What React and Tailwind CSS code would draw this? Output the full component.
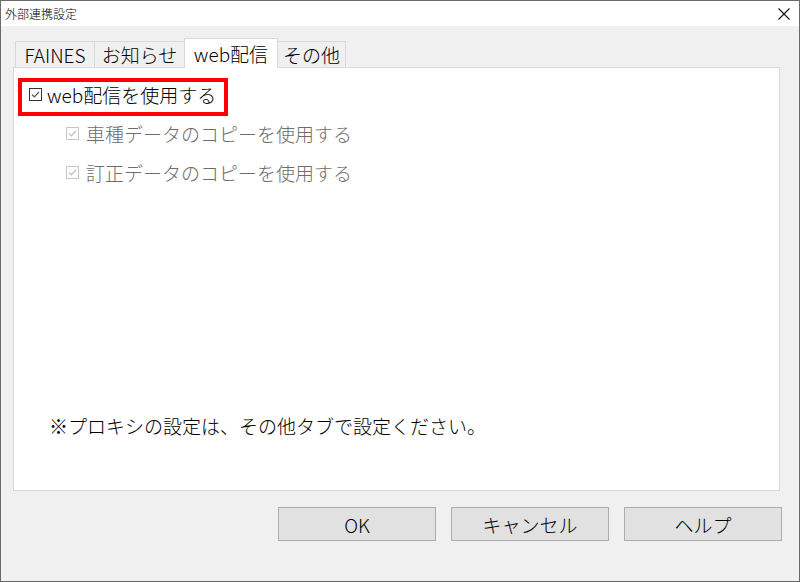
import React from 'react';

const FONT = { fontFamily: '"Noto Sans CJK JP", "Noto Sans", sans-serif' };

const CheckBox = ({ disabled }) => (
    <svg width="13" height="13" viewBox="0 0 13 13" className="shrink-0">
        <rect x="0.5" y="0.5" width="12" height="12" fill="#ffffff" stroke={disabled ? '#c6c6c6' : '#333333'} />
        <path d="M3 6.5 L5.3 8.8 L10 4" fill="none" stroke={disabled ? '#bdbdbd' : '#5a5a5a'} strokeWidth="1.2" />
    </svg>
);

const tabs = [
    { label: 'FAINES', width: 'w-[80px]' },
    { label: 'お知らせ', width: 'w-[91px]' },
    { label: 'web配信', width: 'w-[94px]', active: true },
    { label: 'その他', width: 'w-[69px]' }
];

const App = () => {
    return (
        <div className="w-[800px] h-[582px] border border-[#6a6a6a] bg-[#f0f0f0] flex flex-col text-black font-light" style={FONT}>
            {/* title bar */}
            <div className="h-[25px] bg-white flex items-center justify-between pl-[4px] pr-[9px]">
                <span className="text-[12px] leading-none">外部連携設定</span>
                <svg width="12" height="12" viewBox="0 0 12 12">
                    <path d="M0.5 0.5 L11.5 11.5 M11.5 0.5 L0.5 11.5" stroke="#111" strokeWidth="1.1" />
                </svg>
            </div>

            <div className="flex-1 flex flex-col pt-[12px] pl-[12px] pr-[19px]">
                {/* tabs */}
                <div className="flex items-end pl-[2px]">
                    {tabs.map((t, i) => (
                        <div
                            key={t.label}
                            className={
                                t.active
                                    ? `${t.width} h-[30px] -mb-px -ml-px relative z-10 bg-white border border-b-0 border-[#d9d9d9] flex items-center justify-center text-[19px] leading-none`
                                    : `${t.width} h-[26px] ${i === 0 ? '' : '-ml-px'} bg-[#f0f0f0] border border-b-0 border-[#d9d9d9] flex items-center justify-center text-[19px] leading-none`
                            }
                        >
                            {t.label}
                        </div>
                    ))}
                </div>

                {/* panel */}
                <div className="h-[424px] bg-white border border-[#d9d9d9] flex flex-col">
                    <div className="ml-[4px] mt-[10px] w-[210px] h-[38px] border-[4px] border-[#ff0000] flex items-center gap-[5px] pl-[7px] pb-[5px]">
                        <CheckBox />
                        <span className="text-[19px] leading-none">web配信を使用する</span>
                    </div>

                    <div className="flex flex-col gap-[13px] mt-[4px] pl-[52px] text-[#6d6d6d]">
                        {['車種データのコピーを使用する', '訂正データのコピーを使用する'].map(s => (
                            <div key={s} className="h-[26px] flex items-center gap-[7px]">
                                <CheckBox disabled />
                                <span className="text-[19px] leading-none">{s}</span>
                            </div>
                        ))}
                    </div>

                    <div className="mt-auto mb-[52px] pl-[35px] h-[26px] flex items-center text-[19px] leading-none">
                        ※プロキシの設定は、その他タブで設定ください。
                    </div>
                </div>
            </div>

            {/* buttons */}
            <div className="flex justify-end gap-[15px] pr-[17px] mt-[16px] mb-[40px]">
                {['OK', 'キャンセル', 'ヘルプ'].map(b => (
                    <button
                        key={b}
                        type="button"
                        className="w-[158px] h-[34px] bg-[#e1e1e1] border border-[#adadad] text-[19px] leading-none flex items-center justify-center"
                    >
                        {b}
                    </button>
                ))}
            </div>
        </div>
    );
};

export default App;
